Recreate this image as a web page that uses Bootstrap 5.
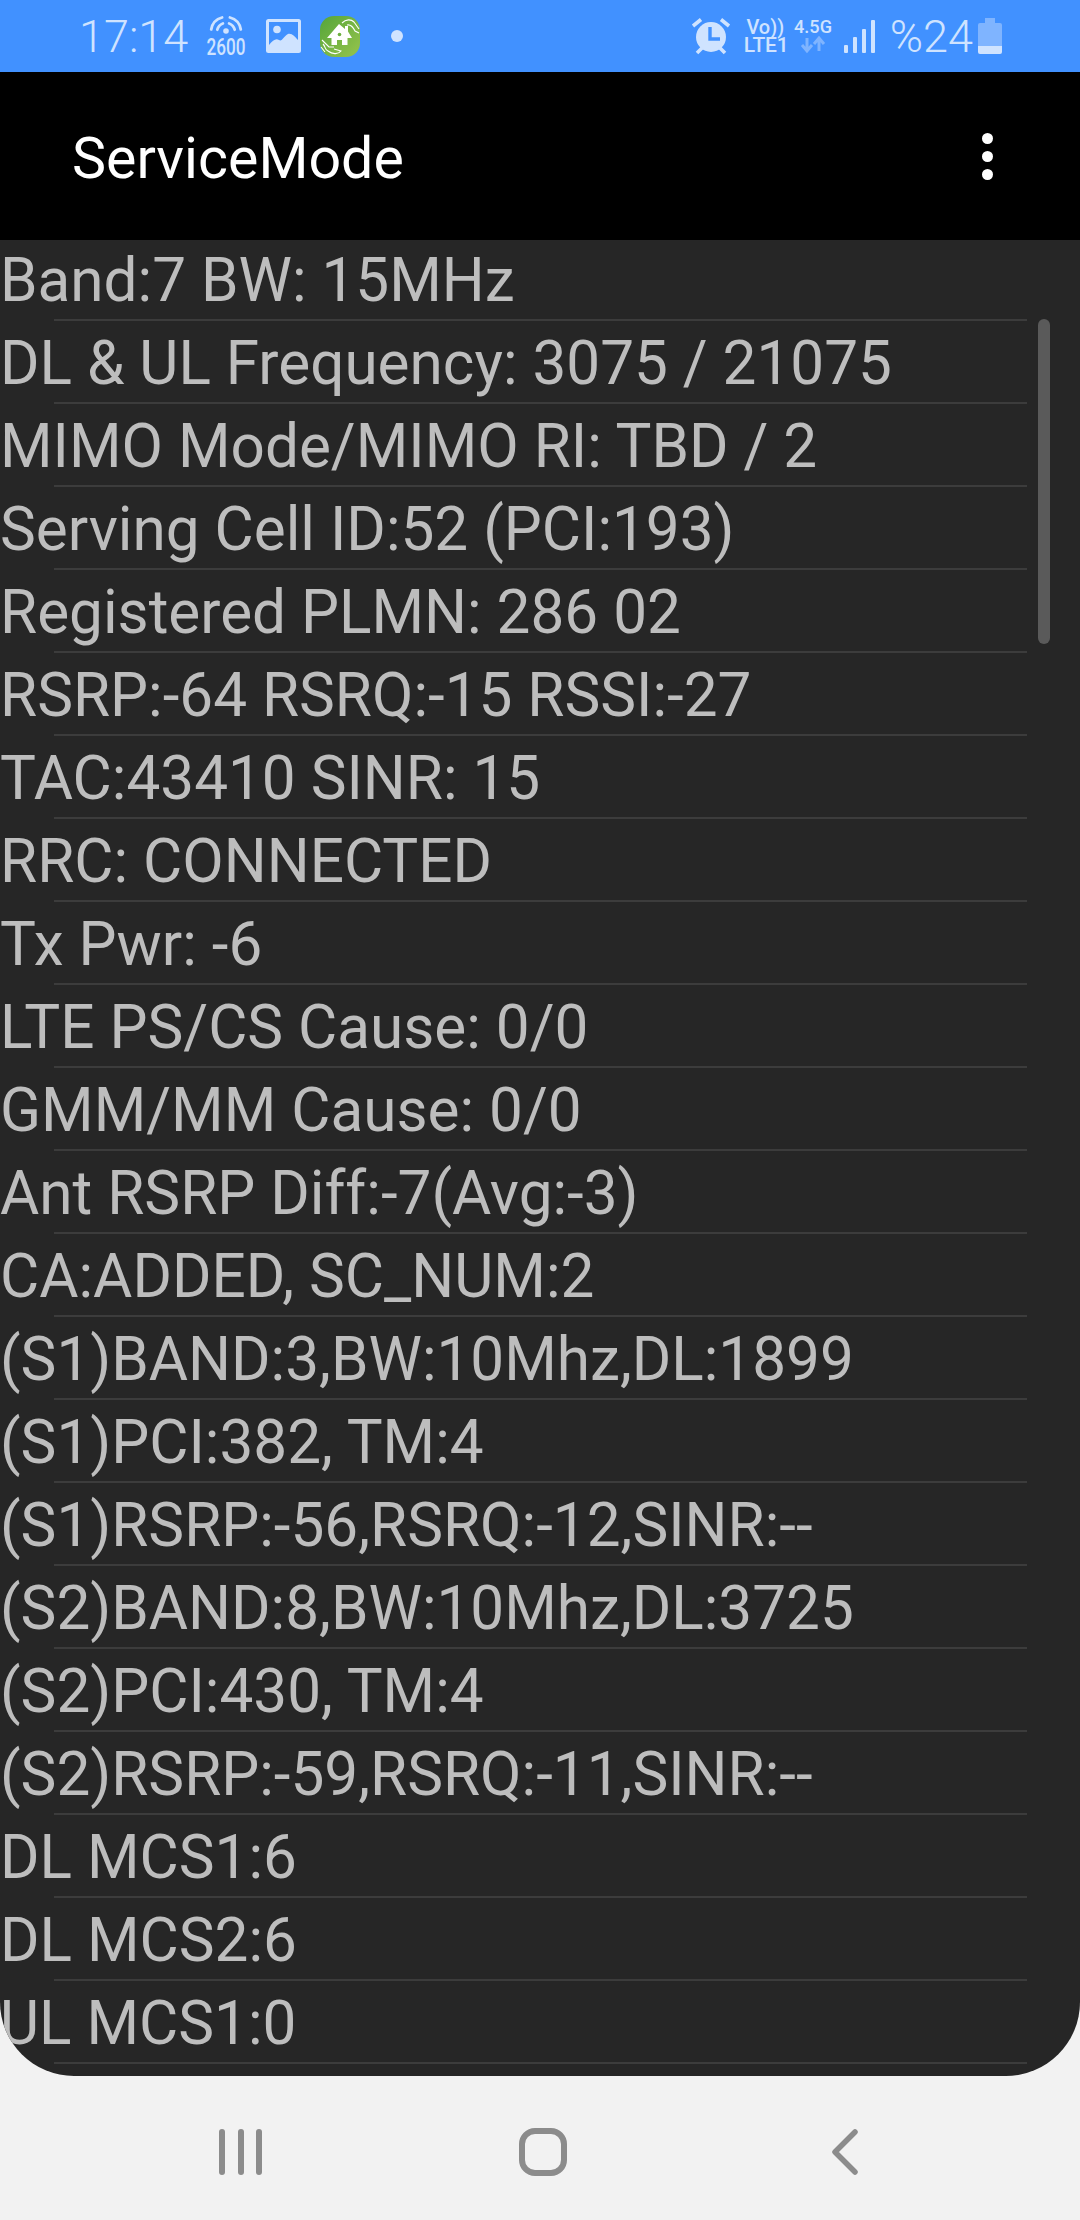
<!DOCTYPE html>
<html lang="en">
<head>
    <meta charset="UTF-8">
    <meta name="viewport" content="width=device-width, initial-scale=1.0">
    <title>ServiceMode</title>
    <link href="https://cdn.jsdelivr.net/npm/bootstrap@5.3.2/dist/css/bootstrap.min.css" rel="stylesheet">
    <style>
        html, body { height: 100%; }
        body {
            margin: 0;
            background-color: #f2f2f2;
            font-family: Roboto, "Liberation Sans", sans-serif;
            overflow: hidden;
        }

        /* status bar */
        .status-bar {
            height: 72px;
            background-color: #4191ff;
            color: #cfe3ff;
            padding-left: 79px;
            padding-right: 78px;
        }
        .status-bar svg { display: block; overflow: visible; }
        .status-text { font-size: 45px; line-height: 1; font-weight: 300; }
        .gap-signal { margin-left: 18px; }
        .gap-image { margin-left: 20px; }
        .gap-app { margin-left: 19px; }
        .gap-dot { margin-left: 31px; }
        .gap-vo { margin-left: 14px; }
        .gap-net { margin-left: 7px; }
        .gap-bars { margin-left: 12px; }
        .gap-pct { margin-left: 15px; }
        .gap-batt { margin-left: 5px; }
        .status-dot {
            display: block;
            width: 12px;
            height: 12px;
            border-radius: 50%;
            background-color: #cfe3ff;
        }
        .ico-stack { font-weight: 500; line-height: 1; text-align: center; white-space: nowrap; }
        .vo-stack { width: 43px; font-size: 20px; }
        .vo-top { display: block; line-height: 18px; }
        .vo-bottom { display: block; line-height: 18px; font-size: 21px; letter-spacing: -.2px; }

        /* app bar */
        .app-bar {
            height: 168px;
            background-color: #000;
            color: #fff;
            padding-left: 72px;
            padding-right: 87px;
        }
        .app-title { font-size: 57.3px; line-height: 1; font-weight: 400; margin: 0; padding-top: 5px; }
        .more-dots { gap: 7px; }
        .more-dot { width: 11px; height: 11px; border-radius: 50%; background-color: #fff; }

        /* list */
        .list-wrap {
            height: 1836px;
            background-color: #262626;
            border-radius: 0 0 74px 74px;
            overflow: hidden;
            position: relative;
        }
        .info-row {
            height: 83px;
            color: #bdbdbd;
            font-size: 60.25px;
            line-height: 82px;
            white-space: nowrap;
            position: relative;
        }
        .info-row::after {
            content: "";
            position: absolute;
            left: 54px;
            width: 973px;
            bottom: 2px;
            height: 2px;
            background-color: #3c3c3c;
        }
        .scroll-thumb {
            position: absolute;
            top: 79px;
            left: 1038px;
            width: 12px;
            height: 325px;
            background-color: #5a5a5a;
            border-radius: 6px;
        }

        /* nav bar */
        .nav-keys { height: 144px; padding-top: 8px; padding-left: 6px; }
        .nav-key { width: 302px; }
        .nav-key svg { display: block; }
    </style>
</head>
<body>
    <div class="status-bar d-flex align-items-center justify-content-between">
        <div class="d-flex align-items-center">
            <span class="status-text">17:14</span>
            <!-- wifi 2600 -->
            <svg class="gap-signal" width="40" height="40" viewBox="0 0 40 40">
                <g fill="none" stroke="#cfe3ff" stroke-width="2.8" stroke-linecap="round">
                    <path d="M5.2 13.4 A15 15 0 0 1 16.1 1.5"/>
                    <path d="M23.9 1.5 A15 15 0 0 1 34.8 13.4"/>
                    <path d="M11.3 13.7 A9 9 0 0 1 16.9 7.5"/>
                    <path d="M23.1 7.5 A9 9 0 0 1 28.7 13.7"/>
                </g>
                <circle cx="20" cy="15" r="2.8" fill="#cfe3ff"/>
                <text x="20" y="39" text-anchor="middle" font-family="Roboto" font-size="23" font-weight="500" fill="#cfe3ff" textLength="39" lengthAdjust="spacingAndGlyphs">2600</text>
            </svg>
            <!-- gallery -->
            <svg class="gap-image" width="35" height="34" viewBox="0 0 35 34">
                <rect width="35" height="34" rx="2.5" fill="#cfe3ff"/>
                <rect x="3" y="3" width="29" height="28" fill="#4191ff"/>
                <circle cx="11" cy="10.5" r="3.8" fill="#cfe3ff"/>
                <path d="M3 26 C7 21 10 19 13 21 C16 23 18 17 22 15 C26 14 29 18 32 21 V31 H3 Z" fill="#cfe3ff"/>
            </svg>
            <!-- green home app -->
            <svg class="gap-app" width="40" height="41" viewBox="0 0 40 41">
                <defs>
                    <linearGradient id="appGrad" x1="0" y1="0" x2="1" y2="1">
                        <stop offset="0" stop-color="#55a53a"/>
                        <stop offset="1" stop-color="#96c44c"/>
                    </linearGradient>
                </defs>
                <rect width="40" height="41" rx="14" fill="url(#appGrad)"/>
                <path d="M19 8 L25 13 V10 H28 V15.5 L32 22 H27.5 V29 H22 V24 H17 V29 H11.5 V22 H7 Z" fill="#fff"/>
                <circle cx="19.5" cy="18.5" r="1.8" fill="#6cb03f"/>
                <path d="M22 7 C26 3 31 3 34 6 L39 13 M27 9 C31 8 33 11 35 15 L39 17" fill="none" stroke="#fff" stroke-width="1.1"/>
                <path d="M2 24 L9 31 H14 M3 28 C6 31 4 33 8 35 C12 38 18 39 21 35 L14 33 M1 31 L5 36" fill="none" stroke="#fff" stroke-width="1.1"/>
            </svg>
            <span class="status-dot gap-dot"></span>
        </div>
        <div class="d-flex align-items-center">
            <!-- alarm -->
            <svg width="38" height="36" viewBox="0 0 38 36">
                <circle cx="19" cy="19" r="15" fill="#cfe3ff"/>
                <path d="M18 9 V21 H28" fill="none" stroke="#4191ff" stroke-width="3.4"/>
                <path d="M1 8 L9 1.5 M37 8 L29 1.5 M5 35 L10 30 M33 35 L28 30" stroke="#cfe3ff" stroke-width="3.6"/>
            </svg>
            <div class="ico-stack vo-stack gap-vo">
                <span class="vo-top">Vo))</span>
                <span class="vo-bottom">LTE1</span>
            </div>
            <!-- 4.5G + arrows -->
            <svg class="gap-net" width="38" height="36" viewBox="0 0 38 36">
                <text x="19" y="15" text-anchor="middle" font-family="Roboto" font-size="19" font-weight="500" fill="#cfe3ff" textLength="38" lengthAdjust="spacingAndGlyphs">4.5G</text>
                <path d="M13 20 V32 M8 27 L13 33 L18 27" fill="none" stroke="#7fb4ff" stroke-width="3"/>
                <path d="M25 33 V21 M20 26 L25 20 L30 26" fill="none" stroke="#7fb4ff" stroke-width="3"/>
            </svg>
            <!-- signal -->
            <svg class="gap-bars" width="31" height="33" viewBox="0 0 31 33">
                <g fill="#cfe3ff">
                    <rect x="0" y="25" width="4" height="8" rx="1"/>
                    <rect x="9" y="17" width="4" height="16" rx="1"/>
                    <rect x="18" y="9" width="4" height="24" rx="1"/>
                    <rect x="27" y="0" width="4" height="33" rx="1"/>
                </g>
            </svg>
            <span class="status-text gap-pct">%24</span>
            <!-- battery -->
            <svg class="gap-batt" width="24" height="36" viewBox="0 0 24 36">
                <path d="M7 0 H17 V5 H22 Q24 5 24 7 V28 H0 V7 Q0 5 2 5 H7 Z" fill="#7fb4ff"/>
                <path d="M0 28 H24 V34 Q24 36 22 36 H2 Q0 36 0 34 Z" fill="#cfe3ff"/>
            </svg>
        </div>
    </div>

    <div class="app-bar d-flex align-items-center justify-content-between">
        <h1 class="app-title">ServiceMode</h1>
        <div class="more-dots d-flex flex-column">
            <span class="more-dot"></span>
            <span class="more-dot"></span>
            <span class="more-dot"></span>
        </div>
    </div>

    <div class="list-wrap" id="infoList">
        <div class="scroll-thumb"></div>
    </div>

    <div class="nav-keys d-flex align-items-center justify-content-center">
        <div class="nav-key d-flex justify-content-center">
            <svg width="44" height="46" viewBox="0 0 44 46" fill="#8c8c8c">
                <rect x="0" y="0" width="6" height="46" rx="3"/>
                <rect x="19" y="0" width="6" height="46" rx="3"/>
                <rect x="37" y="0" width="6" height="46" rx="3"/>
            </svg>
        </div>
        <div class="nav-key d-flex justify-content-center">
            <svg width="48" height="48" viewBox="0 0 48 48">
                <rect x="3" y="3" width="42" height="42" rx="13" fill="none" stroke="#8c8c8c" stroke-width="6"/>
            </svg>
        </div>
        <div class="nav-key d-flex justify-content-center">
            <svg width="26" height="46" viewBox="0 0 26 46">
                <path d="M23 3 L3 23 L23 43" fill="none" stroke="#8c8c8c" stroke-width="5.5" stroke-linecap="round" stroke-linejoin="round"/>
            </svg>
        </div>
    </div>

    <script>
        const lines = [
            'Band:7 BW: 15MHz',
            'DL & UL Frequency: 3075 / 21075',
            'MIMO Mode/MIMO RI: TBD / 2',
            'Serving Cell ID:52 (PCI:193)',
            'Registered PLMN: 286 02',
            'RSRP:-64 RSRQ:-15 RSSI:-27',
            'TAC:43410 SINR: 15',
            'RRC: CONNECTED',
            'Tx Pwr: -6',
            'LTE PS/CS Cause: 0/0',
            'GMM/MM Cause: 0/0',
            'Ant RSRP Diff:-7(Avg:-3)',
            'CA:ADDED, SC_NUM:2',
            '(S1)BAND:3,BW:10Mhz,DL:1899',
            '(S1)PCI:382, TM:4',
            '(S1)RSRP:-56,RSRQ:-12,SINR:--',
            '(S2)BAND:8,BW:10Mhz,DL:3725',
            '(S2)PCI:430, TM:4',
            '(S2)RSRP:-59,RSRQ:-11,SINR:--',
            'DL MCS1:6',
            'DL MCS2:6',
            'UL MCS1:0'
        ];
        const list = document.getElementById('infoList');
        lines.forEach(text => {
            const row = document.createElement('div');
            row.className = 'info-row';
            row.textContent = text;
            list.appendChild(row);
        });
    </script>
    <script src="https://cdn.jsdelivr.net/npm/bootstrap@5.3.2/dist/js/bootstrap.bundle.min.js"></script>
</body>
</html>
